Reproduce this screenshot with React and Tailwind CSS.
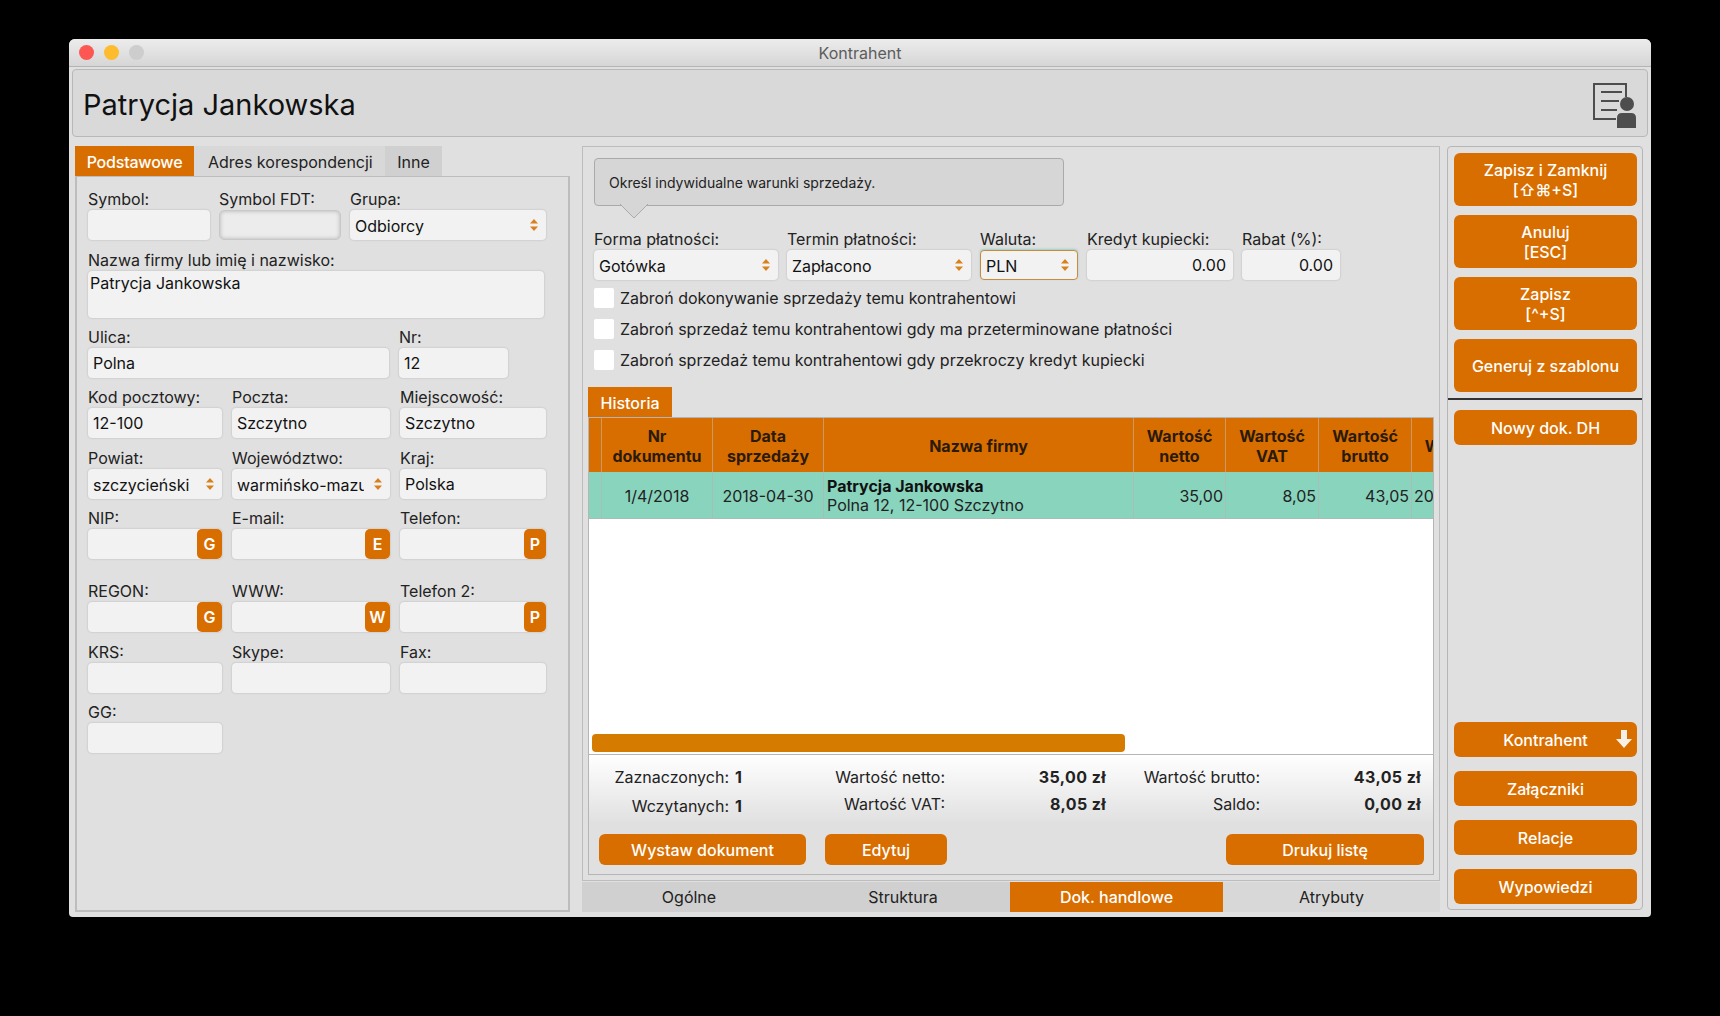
const ORANGE = 'bg-[#d96e00]';

function Stepper() {
  return (
    <svg width="10" height="14" viewBox="0 0 10 14" className="shrink-0">
      <path d="M5 1 L9 5.5 H1 Z" fill="#d9801a" />
      <path d="M5 13 L9 8.5 H1 Z" fill="#d9801a" />
    </svg>
  );
}

function Label({ children }) {
  return <div className="h-[20px] leading-[20px] mb-[1px] whitespace-nowrap text-[#222]">{children}</div>;
}

function Field({ label, value, action, actionW = 'w-[25px]', height = 'h-[30px]' }) {
  return (
    <div className="min-w-0">
      <Label>{label}</Label>
      <div className={`${height} flex items-stretch rounded-[4px] bg-[#f2f2f2] shadow-[0_0_2px_rgba(0,0,0,0.22)]`}>
        <div className="flex-1 min-w-0 pl-[5px] leading-[30px] text-[#111] whitespace-nowrap overflow-hidden">{value}</div>
        {action && (
          <div className={`${actionW} ${ORANGE} rounded-[5px] text-white font-semibold flex items-center justify-center`}>{action}</div>
        )}
      </div>
    </div>
  );
}

function Select({ label, value, focused }) {
  const box = focused
    ? 'border border-[#c98a3c] shadow-[0_-1px_2px_rgba(90,190,170,0.5)] pl-[5px]'
    : 'shadow-[0_0_2px_rgba(0,0,0,0.22)] pl-[5px]';
  return (
    <div className="min-w-0">
      <Label>{label}</Label>
      <div className={`h-[30px] flex items-center rounded-[4px] bg-[#f2f2f2] pr-[7px] gap-[9px] ${box}`}>
        <div className="flex-1 min-w-0 pt-px overflow-hidden whitespace-nowrap text-[#111]">{value}</div>
        <Stepper />
      </div>
    </div>
  );
}

function NumberField({ label, value }) {
  return (
    <div>
      <Label>{label}</Label>
      <div className="h-[30px] leading-[30px] rounded-[4px] bg-[#f2f2f2] shadow-[0_0_2px_rgba(0,0,0,0.22)] text-right pr-[7px] text-[#111]">{value}</div>
    </div>
  );
}

function Check({ children }) {
  return (
    <div className="flex items-center h-[20px] gap-[6px]">
      <div className="w-[20px] h-[20px] bg-white rounded-[2px]" />
      <span className="text-[#222] whitespace-nowrap">{children}</span>
    </div>
  );
}

function SideButton({ children, h = 'h-[53px]', className = '' }) {
  return (
    <div className={`${h} ${ORANGE} ${className} rounded-[6px] text-white font-medium leading-[20px] flex flex-col items-center justify-center shrink-0 relative`}>
      {children}
    </div>
  );
}

function ActionButton({ children, w }) {
  return (
    <div className={`${w} h-[31px] ${ORANGE} rounded-[6px] text-white font-medium flex items-center justify-center`}>{children}</div>
  );
}

function HeaderCell({ children }) {
  return (
    <div className="border-r border-[#c99a66] flex items-center justify-center text-center pt-px leading-[20px] font-bold text-[#2a1a08] overflow-hidden">
      <div>{children}</div>
    </div>
  );
}

function PersonDoc() {
  return (
    <svg width="44" height="46" viewBox="0 0 44 46" fill="none" className="mt-[5px]">
      <path d="M23 36 H1 V1 H33 V14" stroke="#4d4d4d" strokeWidth="2" />
      <path d="M8 9 H29 M8 18 H26 M8 27 H24" stroke="#4d4d4d" strokeWidth="2" />
      <circle cx="34" cy="21" r="7" fill="#4d4d4d" />
      <path d="M24 45 V35 Q24 30 29 30 H38 Q43 30 43 35 V45 Z" fill="#4d4d4d" />
    </svg>
  );
}

export default function App() {
  return (
    <div className="w-[1720px] h-[1016px] bg-black pt-[39px] pl-[69px] overflow-hidden text-[16px] [font-family:Inter,sans-serif]">
      <div className="w-[1582px] h-[878px] rounded-t-[6px] rounded-b-[4px] bg-[#e0e0e0] flex flex-col overflow-hidden">
        <div className="h-[28px] shrink-0 grid grid-cols-[1fr_auto_1fr] items-center bg-gradient-to-b from-[#ececec] to-[#d6d6d6] border-b border-[#b4b4b4]">
          <div className="flex gap-[10px] pl-[10px]">
            <div className="w-[15px] h-[15px] rounded-full bg-[#fc5753]" />
            <div className="w-[15px] h-[15px] rounded-full bg-[#fdbc2e]" />
            <div className="w-[15px] h-[15px] rounded-full bg-[#cdcdcd]" />
          </div>
          <div className="text-[#5c5c5c]">Kontrahent</div>
          <div />
        </div>

        <div className="h-[68px] shrink-0 mt-[2px] mx-[3px] rounded-[4px] border border-[#b8b8b8] bg-[#d9d9d9] flex items-center justify-between pl-[10px] pr-[10px]">
          <div className="text-[29px] pt-[3px] text-[#111]">Patrycja Jankowska</div>
          <PersonDoc />
        </div>

        <div className="flex mt-[9px] pl-[6px] flex-1 min-h-0">
          {/* lewa kolumna */}
          <div className="w-[495px] shrink-0 flex flex-col pb-[5px]">
            <div className="h-[30px] w-[367px] flex bg-[#d0d0d0] shrink-0">
              <div className={`${ORANGE} w-[119px] pt-px flex items-center justify-center text-white font-medium tracking-[-0.2px]`}>Podstawowe</div>
              <div className="pl-[14px] pt-px flex items-center text-[#222] bg-[#d8d8d8] w-[191px] whitespace-nowrap">Adres korespondencji</div>
              <div className="flex-1 pt-px flex items-center justify-center text-[#222]">Inne</div>
            </div>
            <div className="flex-1 border-2 border-t border-[#bdbdbd] pt-[12px] pl-[11px]">
              <div className="grid grid-cols-[122px_122px_196px] gap-x-[9px]">
                <Field label="Symbol:" value="" />
                <div>
                  <Label>Symbol FDT:</Label>
                  <div className="h-[30px] rounded-[5px] bg-[#ececec] border border-[#c8c8c8] shadow-[inset_0_0_4px_rgba(0,0,0,0.25)]" />
                </div>
                <Select label="Grupa:" value="Odbiorcy" />
              </div>
              <div className="mt-[10px] w-[456px]">
                <Label>Nazwa firmy lub imię i nazwisko:</Label>
                <div className="h-[47px] rounded-[4px] bg-[#f2f2f2] shadow-[0_0_2px_rgba(0,0,0,0.22)] px-[2px] leading-[24px] text-[#111]">Patrycja Jankowska</div>
              </div>
              <div className="mt-[9px] grid grid-cols-[301px_109px] gap-x-[10px]">
                <Field label="Ulica:" value="Polna" />
                <Field label="Nr:" value="12" />
              </div>
              <div className="mt-[9px] grid grid-cols-[134px_158px_146px] gap-x-[10px]">
                <Field label="Kod pocztowy:" value="12-100" />
                <Field label="Poczta:" value="Szczytno" />
                <Field label="Miejscowość:" value="Szczytno" />
              </div>
              <div className="mt-[10px] grid grid-cols-[134px_158px_146px] gap-x-[10px]">
                <Select label="Powiat:" value="szczycieński" />
                <Select label="Województwo:" value="warmińsko-mazurskie" />
                <Field label="Kraj:" value="Polska" />
              </div>
              <div className="mt-[9px] grid grid-cols-[134px_158px_146px] gap-x-[10px]">
                <Field label="NIP:" value="" action="G" />
                <Field label="E-mail:" value="" action="E" />
                <Field label="Telefon:" value="" action="P" actionW="w-[22px]" />
              </div>
              <div className="mt-[22px] grid grid-cols-[134px_158px_146px] gap-x-[10px]">
                <Field label="REGON:" value="" action="G" />
                <Field label="WWW:" value="" action="W" />
                <Field label="Telefon 2:" value="" action="P" actionW="w-[22px]" />
              </div>
              <div className="mt-[10px] grid grid-cols-[134px_158px_146px] gap-x-[10px]">
                <Field label="KRS:" value="" />
                <Field label="Skype:" value="" />
                <Field label="Fax:" value="" />
              </div>
              <div className="mt-[9px] w-[134px]">
                <Field label="GG:" value="" />
              </div>
            </div>
          </div>

          {/* środkowa kolumna */}
          <div className="w-[858px] shrink-0 ml-[12px] flex flex-col">
            <div className="h-[735px] shrink-0 border border-[#bdbdbd] pt-[11px] px-[5px] flex flex-col">
              <div className="ml-[6px] w-[470px] h-[48px] relative rounded-[4px] border border-[#aaaaaa] bg-[#d6d6d6] pl-[14px] flex items-center text-[14px] text-[#222] shrink-0">
                Określ indywidualne warunki sprzedaży.
                <svg width="30" height="15" viewBox="0 0 30 15" className="absolute left-[24px] top-full -mt-[1px]">
                  <path d="M1 0 L15 14 L29 0" fill="#d6d6d6" stroke="#aaaaaa" />
                </svg>
              </div>
              <div className="ml-[6px] mt-[23px] grid grid-cols-[184px_184px_98px_146px_98px] gap-x-[9px] shrink-0">
                <Select label="Forma płatności:" value="Gotówka" />
                <Select label="Termin płatności:" value="Zapłacono" />
                <Select label="Waluta:" value="PLN" focused />
                <NumberField label="Kredyt kupiecki:" value="0.00" />
                <NumberField label="Rabat (%):" value="0.00" />
              </div>
              <div className="ml-[6px] mt-[8px] flex flex-col gap-[11px] shrink-0">
                <Check>Zabroń dokonywanie sprzedaży temu kontrahentowi</Check>
                <Check>Zabroń sprzedaż temu kontrahentowi gdy ma przeterminowane płatności</Check>
                <Check>Zabroń sprzedaż temu kontrahentowi gdy przekroczy kredyt kupiecki</Check>
              </div>
              <div className="mt-[17px] w-[84px] h-[30px] pt-px shrink-0 bg-[#d96e00] text-white font-medium flex items-center justify-center">Historia</div>

              <div className="flex-1 min-h-0 border border-[#b5b5b5] mb-[5px] flex flex-col">
                <div className="h-[337px] shrink-0 bg-white border-b border-[#b5b5b5] flex flex-col overflow-hidden">
                  <div className="w-[846px] overflow-hidden shrink-0">
                    <div className="grid grid-cols-[13px_111px_111px_310px_92px_93px_93px_92px] w-[915px] grid-rows-[54px_47px]">
                      <div className={`${ORANGE} border-r border-[#c99a66]`} />
                      <div className={`${ORANGE} grid`}><HeaderCell>Nr<br />dokumentu</HeaderCell></div>
                      <div className={`${ORANGE} grid`}><HeaderCell>Data<br />sprzedaży</HeaderCell></div>
                      <div className={`${ORANGE} grid`}><HeaderCell>Nazwa firmy</HeaderCell></div>
                      <div className={`${ORANGE} grid`}><HeaderCell>Wartość<br />netto</HeaderCell></div>
                      <div className={`${ORANGE} grid`}><HeaderCell>Wartość<br />VAT</HeaderCell></div>
                      <div className={`${ORANGE} grid`}><HeaderCell>Wartość<br />brutto</HeaderCell></div>
                      <div className={`${ORANGE} grid`}><HeaderCell>Wartość</HeaderCell></div>

                      <div className="bg-[#88d4bd] border-r border-b border-[#a9bdb6]" />
                      <div className="bg-[#88d4bd] border-r border-b border-[#a9bdb6] pt-[2px] flex items-center justify-center text-[#222]">1/4/2018</div>
                      <div className="bg-[#88d4bd] border-r border-b border-[#a9bdb6] pt-[2px] flex items-center justify-center text-[#222]">2018-04-30</div>
                      <div className="bg-[#88d4bd] border-r border-b border-[#a9bdb6] pt-[2px] flex flex-col justify-center pl-[3px] leading-[19px] text-[#222]">
                        <div className="font-bold text-[#111]">Patrycja Jankowska</div>
                        <div>Polna 12, 12-100 Szczytno</div>
                      </div>
                      <div className="bg-[#88d4bd] border-r border-b border-[#a9bdb6] pt-[2px] flex items-center justify-end pr-[2px] text-[#222]">35,00</div>
                      <div className="bg-[#88d4bd] border-r border-b border-[#a9bdb6] pt-[2px] flex items-center justify-end pr-[2px] text-[#222]">8,05</div>
                      <div className="bg-[#88d4bd] border-r border-b border-[#a9bdb6] pt-[2px] flex items-center justify-end pr-[2px] text-[#222]">43,05</div>
                      <div className="bg-[#88d4bd] border-b border-[#a9bdb6] pt-[2px] flex items-center pl-[2px] text-[#222] whitespace-nowrap">2018-04-30</div>
                    </div>
                  </div>
                  <div className="mt-auto mb-[2px] ml-[3px] w-[533px] h-[18px] rounded-[4px] bg-[#d57b00] shrink-0" />
                </div>

                <div className="h-[69px] shrink-0 bg-gradient-to-b from-white to-[#e0e0e0] pt-[10px] grid grid-cols-[140px_30px_186px_161px_154px_161px] grid-rows-[20px_20px] gap-y-[9px] whitespace-nowrap text-[#222]">
                  <div className="text-right">Zaznaczonych:</div>
                  <div className="pl-[6px] font-bold">1</div>
                  <div className="text-right">Wartość netto:</div>
                  <div className="text-right font-bold tracking-[0.4px]">35,00 zł</div>
                  <div className="text-right">Wartość brutto:</div>
                  <div className="text-right font-bold tracking-[0.4px]">43,05 zł</div>
                  <div className="text-right">Wczytanych:</div>
                  <div className="pl-[6px] font-bold">1</div>
                  <div className="text-right -mt-[2px]">Wartość VAT:</div>
                  <div className="text-right font-bold tracking-[0.4px] -mt-[2px]">8,05 zł</div>
                  <div className="text-right -mt-[2px]">Saldo:</div>
                  <div className="text-right font-bold tracking-[0.4px] -mt-[2px]">0,00 zł</div>
                </div>

                <div className="flex pt-[10px] pl-[10px] pr-[9px]">
                  <ActionButton w="w-[207px]">Wystaw dokument</ActionButton>
                  <div className="ml-[19px]"><ActionButton w="w-[122px]">Edytuj</ActionButton></div>
                  <div className="ml-auto"><ActionButton w="w-[198px]">Drukuj listę</ActionButton></div>
                </div>
              </div>
            </div>
            <div className="h-[30px] shrink-0 mt-px grid grid-cols-[214px_214px_213px_1fr] bg-[#d0d0d0] text-[#222]">
              <div className="flex items-center justify-center">Ogólne</div>
              <div className="flex items-center justify-center">Struktura</div>
              <div className={`${ORANGE} flex items-center justify-center text-white font-medium`}>Dok. handlowe</div>
              <div className="flex items-center justify-center bg-[#d8d8d8]">Atrybuty</div>
            </div>
          </div>

          {/* prawa kolumna */}
          <div className="w-[196px] h-[764px] shrink-0 ml-[7px] rounded-[4px] border border-[#b5b5b5] pt-[6px] flex flex-col">
            <div className="pl-[6px] pr-[5px] flex flex-col gap-[9px]">
              <SideButton>
                <div>Zapisz i Zamknij</div>
                <div>[⇧⌘+S]</div>
              </SideButton>
              <SideButton>
                <div>Anuluj</div>
                <div>[ESC]</div>
              </SideButton>
              <SideButton>
                <div>Zapisz</div>
                <div>[^+S]</div>
              </SideButton>
              <SideButton>Generuj z szablonu</SideButton>
            </div>
            <div className="mt-[6px] h-[2px] bg-[#333] shrink-0" />
            <div className="pl-[6px] pr-[5px] mt-[10px] flex-1 flex flex-col gap-[14px] pb-[5px]">
              <SideButton h="h-[35px]">Nowy dok. DH</SideButton>
              <div className="flex-1" />
              <SideButton h="h-[35px]">
                Kontrahent
                <svg width="16" height="18" viewBox="0 0 16 18" className="absolute right-[5px] top-[8px]">
                  <path d="M5 0 H11 V9 H16 L8 18 L0 9 H5 Z" fill="#f7f0e6" />
                </svg>
              </SideButton>
              <SideButton h="h-[35px]">Załączniki</SideButton>
              <SideButton h="h-[35px]">Relacje</SideButton>
              <SideButton h="h-[35px]">Wypowiedzi</SideButton>
            </div>
          </div>
        </div>
      </div>
    </div>
  );
}
